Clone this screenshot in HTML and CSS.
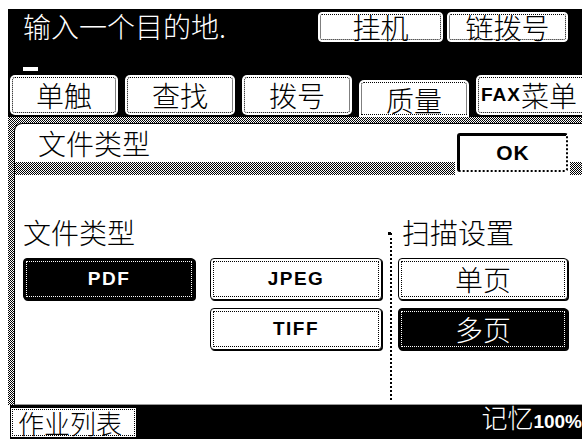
FILE: index.html
```html
<!DOCTYPE html>
<html lang="zh">

<head>
    <title>文件类型</title>
    <meta name="viewport" content="width=device-width, initial-scale=1" />
    <link rel="stylesheet" href="styles.css">
</head>

<body>
    <div class="screen">
        <div class="header">
            <div class="top">
                <div class="prompt">输入一个目的地.</div>
                <div class="top-btns">
                    <div class="btn top-btn hang">挂机</div>
                    <div class="btn top-btn chain">链拨号</div>
                </div>
            </div>
            <div class="cursor"></div>
            <div class="tabs">
                <div class="tab">单触</div>
                <div class="tab">查找</div>
                <div class="tab">拨号</div>
                <div class="tab active">质量</div>
                <div class="tab fax"><b>FAX</b>菜单</div>
            </div>
        </div>

        <div class="panel">
            <div class="panel-body">
                <div class="panel-head">
                    <div class="panel-title">文件类型</div>
                    <div class="hatch"></div>
                    <div class="ok-wrap">
                        <div class="ok">OK</div>
                    </div>
                </div>
                <div class="section">
                    <div class="group left">
                        <div class="label">文件类型</div>
                        <div class="type-grid">
                            <div class="btn opt on">PDF</div>
                            <div class="btn opt">JPEG</div>
                            <div class="btn opt tiff">TIFF</div>
                        </div>
                    </div>
                    <div class="divider"></div>
                    <div class="group right">
                        <div class="label scan">扫描设置</div>
                        <div class="scan-list">
                            <div class="btn opt cjk">单页</div>
                            <div class="btn opt cjk on">多页</div>
                        </div>
                    </div>
                </div>
            </div>
        </div>

        <div class="footer">
            <div class="btn jobs">作业列表</div>
            <div class="memory">记忆<b>100%</b></div>
        </div>
    </div>
</body>

</html>
```

FILE: styles.css
```css
* {
    box-sizing: border-box;
}

body {
    margin: 0;
    background: #fff;
    overflow: hidden;
    font-family: "Noto Sans CJK SC", sans-serif;
    font-size: 28px;
    line-height: 30px;
    font-weight: 300;
    color: #000;
}

b {
    font-family: "Liberation Sans", "Noto Sans CJK SC", sans-serif;
    font-weight: 700;
}

.screen {
    width: 582px;
    height: 439px;
    padding: 9px 0 0 8px;
    overflow: hidden;
}

/* header */

.header {
    background: #000;
    padding-bottom: 2px;
}

.top {
    display: flex;
    justify-content: space-between;
    height: 33px;
    padding: 0 14px 0 15px;
}

.prompt {
    color: #fff;
    padding-top: 2px;
    white-space: nowrap;
}

.top-btns {
    display: flex;
    gap: 4px;
    margin-top: 3px;
}

.btn {
    display: flex;
    align-items: center;
    justify-content: center;
    background: #fff;
    color: #000;
    border: 1px solid #000;
    border-radius: 4px;
    outline: 1px dotted #000;
    outline-offset: -4px;
    box-shadow: 1px 1px 0 #000;
    white-space: nowrap;
}

.top-btn {
    height: 30px;
    border-color: #fff;
    outline-offset: -3px;
}

.hang {
    width: 125px;
}

.chain {
    width: 121px;
}

.cursor {
    width: 15px;
    height: 4px;
    margin: 25px 0 0 15px;
    background: #fff;
}

.tabs {
    display: flex;
    align-items: flex-end;
    gap: 7px;
    height: 40px;
    margin-top: 4px;
    padding-left: 2px;
}

.tab {
    flex-shrink: 0;
    width: 110px;
    height: 40px;
    display: flex;
    align-items: center;
    justify-content: center;
    background: #fff;
    border-radius: 5px;
    outline: 1px dotted #000;
    outline-offset: -3px;
    white-space: nowrap;
}

.tab:first-child {
    width: 108px;
}

.tab.active {
    height: 37px;
    margin-bottom: -2px;
    padding-top: 2px;
    border-radius: 5px 5px 0 0;
}

.tab.fax {
    width: 120px;
    justify-content: flex-start;
    padding-left: 5px;
}

.tab.fax b {
    font-size: 19px;
    letter-spacing: 1px;
}

/* panel */

.panel {
    height: 288px;
    display: flex;
    padding: 6px 0 0 6px;
    background: repeating-conic-gradient(#000 0 25%, #fff 0 50%) 0 0 / 2px 2px;
}

.panel-body {
    flex: 1;
    background: #fff;
    border-left: 1px solid #000;
    border-top: 1px solid #000;
    border-bottom: 1px solid #999;
    border-top-left-radius: 8px;
}

.panel-head {
    display: grid;
    grid-template-columns: 1fr auto;
    grid-template-rows: 38px 13px;
}

.panel-title {
    grid-column: 1;
    grid-row: 1;
    padding: 4px 0 0 23px;
}

.hatch {
    grid-column: 1 / 3;
    grid-row: 2;
    background: repeating-conic-gradient(#000 0 25%, #fff 0 50%) 0 0 / 2px 2px;
}

.ok-wrap {
    grid-column: 2;
    grid-row: 1 / 3;
    margin: 9px 12px 0 0;
    padding: 0 2px 3px;
    background: #fff;
}

.ok {
    width: 111px;
    height: 39px;
    display: flex;
    align-items: center;
    justify-content: center;
    border: 3px solid #000;
    border-right: 2px dotted #000;
    border-bottom: 2px dotted #000;
    border-radius: 3px;
    font-family: "Liberation Sans", sans-serif;
    font-weight: 700;
    font-size: 21px;
    letter-spacing: 1px;
}

.section {
    display: flex;
    height: 225px;
    padding-top: 42px;
}

.group.left {
    padding-left: 8px;
}

.label {
    white-space: nowrap;
}

.label.scan {
    padding-left: 4px;
}

.type-grid {
    display: grid;
    grid-template-columns: 172px 172px;
    grid-template-rows: 42px 42px;
    column-gap: 15px;
    row-gap: 8px;
    margin-top: 11px;
}

.opt {
    font-family: "Liberation Sans", sans-serif;
    font-weight: 700;
    font-size: 19px;
    letter-spacing: 1.5px;
}

.opt.cjk {
    font-family: "Noto Sans CJK SC", sans-serif;
    font-weight: 300;
    font-size: 28px;
    letter-spacing: 0;
}

.opt.on {
    background: #000;
    color: #fff;
    outline-color: #fff;
}

.tiff {
    grid-column: 2;
    grid-row: 2;
}

.divider {
    position: relative;
    width: 0;
    margin: 16px 6px 0 8px;
    border-left: 2px dotted #000;
}

.divider::before {
    content: "";
    position: absolute;
    left: -4px;
    top: -1px;
    width: 3px;
    height: 3px;
    background: #000;
}

.scan-list {
    display: flex;
    flex-direction: column;
    gap: 8px;
    margin-top: 11px;
}

.scan-list .opt {
    width: 170px;
    height: 42px;
}

/* footer */

.footer {
    height: 34px;
    margin-left: 2px;
    background: #000;
    display: flex;
    justify-content: space-between;
    align-items: flex-end;
    font-size: 26px;
    line-height: 26px;
}

.jobs {
    width: 127px;
    height: 31px;
    margin-bottom: 1px;
    justify-content: flex-start;
    align-items: center;
    padding: 0 0 0 7px;
    border-radius: 0;
    box-shadow: none;
    outline-offset: -3px;
}

.memory {
    color: #fff;
    padding-bottom: 4px;
    white-space: nowrap;
}

.memory b {
    font-size: 19px;
}
```
